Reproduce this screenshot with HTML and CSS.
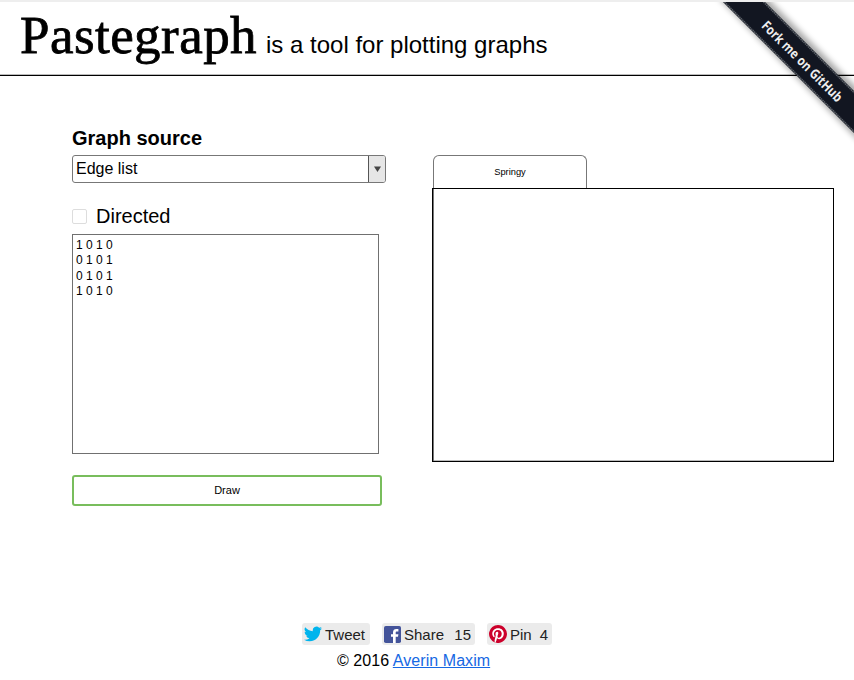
FILE: index.html
```html
<!DOCTYPE html>
<html lang="en">
<head>
<meta charset="utf-8">
<title>Pastegraph</title>
<link rel="stylesheet" href="styles.css">
</head>
<body>
<header class="header">
  <h1 class="title">Pastegraph</h1>
  <p class="tagline">is a tool for plotting graphs</p>
</header>
<a class="ribbon" href="#">
  <svg width="154" height="154" viewBox="700 2 154 154">
    <defs><filter id="shadow" x="-20%" y="-20%" width="140%" height="140%"><feGaussianBlur stdDeviation="3"/></filter></defs>
    <path d="M718 -3H766L860 91V142Z" fill="#000" opacity=".35" filter="url(#shadow)"/>
    <path d="M717 -4H759L860 97V139Z" fill="#121621"/>
    <path d="M718.5 -4L860 137.500M757.500 -4L860 98.500" fill="none" stroke="#5b6067" stroke-width="1.500" stroke-dasharray="1.500 .6"/>
    <text class="ribbon-text" transform="translate(802 61.500) rotate(45)" x="-54" y="4.500" textLength="108" lengthAdjust="spacingAndGlyphs">Fork me on GitHub</text>
  </svg>
</a>
<main class="main">
  <form class="source">
    <h2 class="label">Graph source</h2>
    <div class="select"><span class="select-value">Edge list</span><span class="select-button"><svg width="7" height="6" viewBox="0 0 7 6"><path d="M0 .5H7L3.500 6Z" fill="#444"/></svg></span></div>
    <label class="directed"><span class="checkbox"></span>Directed</label>
    <div class="matrix">1 0 1 0
0 1 0 1
0 1 0 1
1 0 1 0</div>
    <button class="draw" type="button">Draw</button>
  </form>
  <section class="output">
    <div class="tab">Springy</div>
    <div class="canvas"></div>
  </section>
</main>
<footer class="footer">
  <div class="shares">
    <a class="share tweet"><svg width="18" height="18" viewBox="0 0 24 24"><path fill="#00b4ed" d="M23.950 4.570a10 10 0 0 1-2.820.770 4.960 4.960 0 0 0 2.160-2.720c-.950.550-2 .950-3.130 1.180a4.920 4.920 0 0 0-8.380 4.480C7.690 8.090 4.070 6.130 1.640 3.160a4.920 4.920 0 0 0 1.520 6.570 4.900 4.900 0 0 1-2.230-.610v.060a4.920 4.920 0 0 0 3.950 4.830 5 5 0 0 1-2.210.080 4.940 4.940 0 0 0 4.600 3.420A9.870 9.870 0 0 1 0 19.540a13.990 13.990 0 0 0 7.550 2.210c9.050 0 14-7.500 14-13.980 0-.210 0-.420-.020-.630a9.940 9.940 0 0 0 2.420-2.570z"/></svg><span>Tweet</span></a>
    <a class="share facebook"><svg width="17" height="17" viewBox="0 0 17 17"><rect width="17" height="17" rx="1.800" fill="#44549a"/><path fill="#fff" d="M9 17v-6.200H7V8.200h2V6.400C9 4 10.300 2.900 12.400 2.900h2v2.500h-1.300c-1.100 0-1.400.5-1.400 1.300v1.500h2.700l-.4 2.600h-2.300V17z"/></svg><span>Share</span><span class="count">15</span></a>
    <a class="share pin"><svg width="18" height="18" viewBox="0 0 24 24"><circle cx="12" cy="12" r="11.500" fill="#fff"/><path fill="#cc002b" d="M12 0a12 12 0 0 0-4.370 23.170c-.1-.950-.2-2.400.040-3.430l1.400-5.960s-.360-.720-.360-1.780c0-1.670.970-2.910 2.170-2.910 1.020 0 1.520.770 1.520 1.690 0 1.030-.650 2.570-1 4-.280 1.190.6 2.160 1.780 2.160 2.130 0 3.770-2.250 3.770-5.490 0-2.860-2.060-4.870-5-4.870-3.410 0-5.410 2.560-5.410 5.200 0 1.030.390 2.140.890 2.740.1.120.110.220.080.340l-.330 1.360c-.050.220-.170.270-.4.160-1.500-.7-2.430-2.880-2.430-4.650 0-3.780 2.750-7.250 7.920-7.250 4.160 0 7.400 2.970 7.400 6.930 0 4.130-2.610 7.460-6.230 7.460-1.210 0-2.350-.630-2.740-1.380l-.750 2.850c-.270 1.040-1 2.350-1.490 3.140A12 12 0 1 0 12 0z"/></svg><span>Pin</span><span class="count">4</span></a>
  </div>
  <p class="copyright">© 2016 <a class="author" href="#">Averin Maxim</a></p>
</footer>
</body>
</html>
```
FILE: styles.css
```css
* { box-sizing: border-box; }
body {
  margin: 0;
  height: 680px;
  overflow: hidden;
  position: relative;
  background: #fff;
  color: #000;
  font-family: "Liberation Sans", Arial, sans-serif;
}
h1, h2, p { margin: 0; font-weight: normal; }
.header {
  height: 76px;
  display: flex;
  align-items: baseline;
  padding: 2px 0 0 20px;
  border-top: 2px solid #eee;
  border-bottom: 1px solid #000;
  box-shadow: inset 0 -1px #bbb;
}
.title {
  width: 246px;
  font: 53px/62px "Liberation Serif", "Times New Roman", serif;
  letter-spacing: .45px;
  -webkit-text-stroke: .8px #000;
}
.tagline { font-size: 24px; line-height: 28px; }
.ribbon { position: absolute; top: 2px; right: 0; width: 154px; height: 154px; }
.ribbon svg { display: block; }
.ribbon-text { font: bold 13.5px "Open Sans", sans-serif; fill: #eee; }
.main {
  display: grid;
  grid-template-columns: 314px 402px;
  column-gap: 46px;
  padding: 50px 20px 0 72px;
  height: 547px;
}
.label { height: 29px; font-size: 20px; line-height: 24px; font-weight: bold; }
.select {
  display: flex;
  height: 28px;
  border: 1px solid #777;
  border-radius: 3px;
  overflow: hidden;
}
.select-value { flex: 1; padding-left: 3px; font-size: 16px; line-height: 26px; }
.select-button {
  width: 17px;
  display: flex;
  align-items: center;
  justify-content: center;
  background: #e6e6e6;
  border-left: 1px solid #555;
}
.directed {
  display: flex;
  align-items: center;
  gap: 9px;
  height: 24px;
  margin: 21px 0 6px;
  font-size: 20px;
}
.checkbox { width: 15px; height: 15px; border: 1px solid #ddd; border-radius: 2px; }
.matrix {
  width: 307px;
  height: 220px;
  padding: 3px 3px 2px;
  border: 1px solid #707070;
  font-size: 12px;
  line-height: 15.3px;
  white-space: pre;
}
.draw {
  display: block;
  width: 310px;
  height: 31px;
  margin-top: 21px;
  padding: 0 0 2px;
  background: #fff;
  border: 2px solid #78bd5c;
  border-radius: 3px;
  color: #000;
  font: 11px "Liberation Sans", Arial, sans-serif;
}
.output { padding-top: 29px; }
.tab {
  width: 154px;
  height: 33px;
  margin-left: 1px;
  border: 1px solid #777;
  border-bottom: 0;
  border-radius: 6px 6px 0 0;
  font-size: 9.3px;
  line-height: 33px;
  text-align: center;
}
.canvas {
  width: 402px;
  height: 274px;
  border: 1px solid #000;
  box-shadow: inset 1px 0 #777, inset 0 -1px #bbb;
}
.shares { display: flex; gap: 12px; margin-left: 302px; }
.share {
  display: flex;
  align-items: center;
  height: 22px;
  padding-left: 2px;
  border-radius: 3px;
  background: #ebebeb;
  color: #222;
  font-size: 15px;
}
.share svg { margin-right: 3px; flex: none; }
.tweet { width: 68px; }
.facebook { width: 93px; }
.pin { width: 65px; }
.count { margin-left: auto; padding-right: 4px; }
.copyright { margin: 5px 0 0 337px; font-size: 16px; line-height: 22px; letter-spacing: .06px; }
.author { color: #1668e3; }
```
